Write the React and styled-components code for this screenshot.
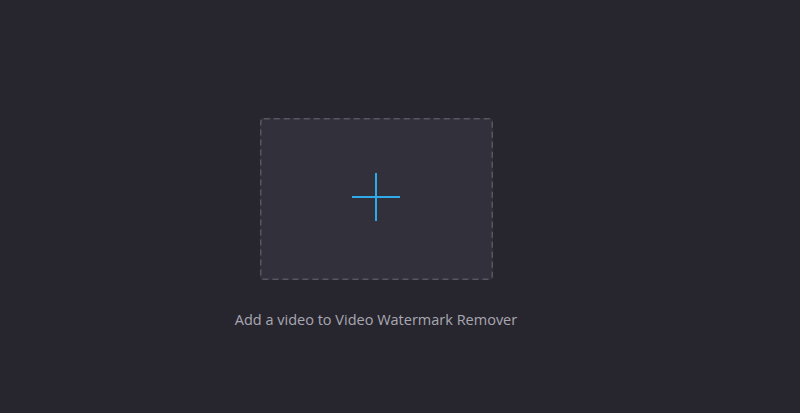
import styled, { createGlobalStyle } from "styled-components"

const GlobalStyle = createGlobalStyle`
    html, body {
        margin: 0;
        padding: 0;
        background: #27262f;
    }
`

// dashed outline with longer dashes than css "dashed" gives
const dashes = encodeURIComponent(
    `<svg xmlns="http://www.w3.org/2000/svg" width="233" height="162"><rect x="0.75" y="0.75" width="231.5" height="160.5" rx="3" fill="none" stroke="#585761" stroke-width="1.5" stroke-dasharray="6 4"/></svg>`
)

export default function App(){
    return(
        <>
            <GlobalStyle/>
            <Page>
                <DropZone>
                    <Plus/>
                </DropZone>
                <Hint>Add a video to Video Watermark Remover</Hint>
            </Page>
        </>
    )
}

const Page = styled.div`
    width: 800px;
    height: 413px;
    background: #27262f;
    display: flex;
    flex-direction: column;
    align-items: center;
    padding-top: 118px;
    box-sizing: border-box;
`

const DropZone = styled.div`
    width: 233px;
    height: 162px;
    margin-left: -48px;
    border-radius: 3px;
    background: #31303b url("data:image/svg+xml,${dashes}") no-repeat;
    display: flex;
    align-items: center;
    justify-content: center;
    padding-bottom: 4px;
    box-sizing: border-box;
    cursor: pointer;
`

const Plus = styled.div`
    position: relative;
    width: 48px;
    height: 48px;

    &::before, &::after {
        content: "";
        position: absolute;
        background: #2ea9ea;
    }

    &::before {
        left: 0;
        top: 23px;
        width: 48px;
        height: 2px;
    }

    &::after {
        left: 23px;
        top: 0;
        width: 2px;
        height: 48px;
    }
`

const Hint = styled.p`
    margin: 30px 0 0 -48px;
    font-family: "Open Sans", sans-serif;
    font-size: 14.5px;
    color: #a9a8b1;
`
